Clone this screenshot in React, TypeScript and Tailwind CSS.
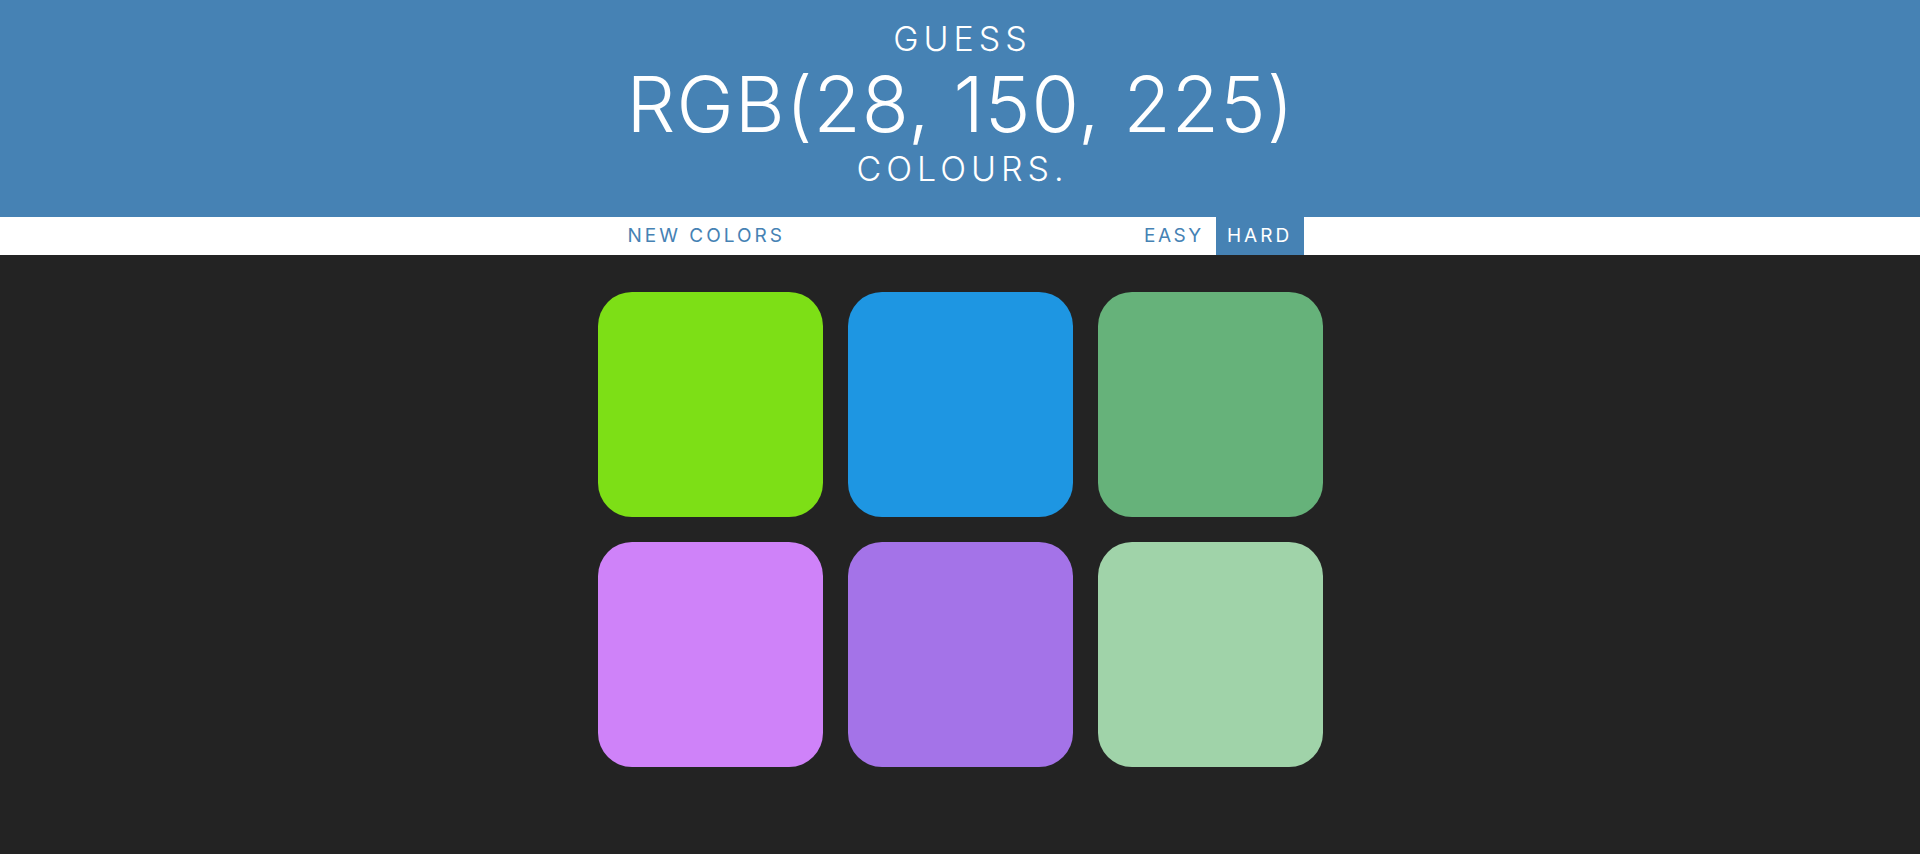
import React from "react";

const squares = ["#7ddf16", "#1e96e2", "#66b27a", "#cf82f9", "#a473e8", "#a0d3a9"];

const Square = ({ color }: { color: string }) => (
  <div className="m-[12.5px] h-[225px] w-[225px] rounded-[34px]" style={{ backgroundColor: color }} />
);

const App = () => {
  return (
    <div className="min-h-screen bg-[#232323] font-['Inter',sans-serif]">
      <header className="h-[217px] bg-[#4682b4] pt-[19px] text-center font-light text-white uppercase">
        <div className="pl-[5px] text-[34px] leading-[40px] tracking-[5px]">Guess</div>
        <div className="pl-[1px] text-[77px] leading-[90px] tracking-[1px]">RGB(28, 150, 225)</div>
        <div className="pl-[5px] text-[34px] leading-[40px] tracking-[5px]">Colours.</div>
      </header>

      <nav className="h-[38px] bg-white">
        <div className="mx-auto flex h-full w-[688px] items-stretch justify-between text-[19px] leading-[38px] tracking-[3px] text-[#4682b4] uppercase">
          <button className="pl-[11.5px] pr-[11px] uppercase">New Colors</button>
          <div className="flex">
            <button className="w-[84px] pl-[12px] text-left tracking-[2.5px] uppercase">Easy</button>
            <button className="w-[88px] bg-[#4682b4] pl-[11px] text-left text-white uppercase">Hard</button>
          </div>
        </div>
      </nav>

      <main className="mx-auto flex w-[750px] flex-wrap pt-[24px]">
        {squares.map((c) => (
          <Square key={c} color={c} />
        ))}
      </main>
    </div>
  );
};

export default App;
